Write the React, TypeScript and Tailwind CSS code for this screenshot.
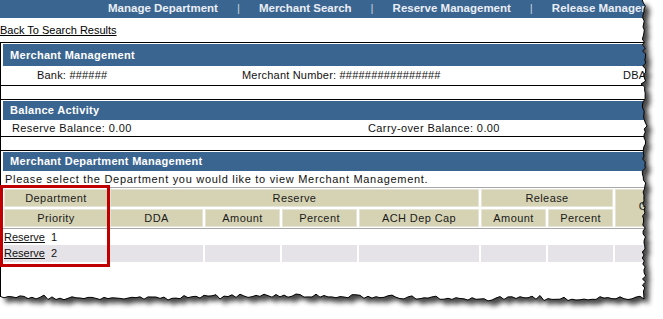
import React from "react";

const blue = "bg-[#3b6591]";

// torn paper edge, right side and bottom
function tornEdge() {
  let s = 11;
  const r = () => {
    s = (s * 16807) % 2147483647;
    return s / 2147483647;
  };
  const right: [number, number][] = [];
  for (let y = 0; y <= 291; y += 3) {
    const x = 644 + (r() - 0.5) * 3.5 + (r() > 0.85 ? (r() - 0.5) * 5 : 0);
    right.push([x, y]);
  }
  const bottom: [number, number][] = [];
  for (let x = 644; x >= 0; x -= 4) {
    const base = 297 + 1.5 * Math.sin(x / 60) + (x > 540 ? 2 : 0);
    const y = base + (r() - 0.5) * 3.5 + (r() > 0.85 ? (r() - 0.5) * 5 : 0);
    bottom.push([x, y]);
  }
  const pts = [...right, ...bottom].map(([x, y]) => `${x.toFixed(1)},${y.toFixed(1)}`);
  const edge = "M" + pts.join(" L");
  const paper = `M0,0 L${pts.join(" L")} Z`;
  return { edge, paper };
}

const { edge, paper } = tornEdge();

const Sep = () => <span className="px-[19px] font-normal text-[#c6cedb]">|</span>;

const Header = ({ children, h }: { children: React.ReactNode; h: string }) => (
  <div className={`${blue} ${h} flex items-center pl-[7px] text-[11px] font-bold tracking-[0.3px] text-white`}>
    {children}
  </div>
);

const cols = "grid grid-cols-[104px_93px_75px_75px_120px_65px_65px_80px] gap-x-[2px]";
const th = "flex h-[18px] items-center justify-center border border-[#e6e4d6] bg-[#d6d3b4] text-[11px] tracking-[0.4px] text-[#1a1a1a]";

export default function App() {
  return (
    <div className="relative h-[319px] w-[663px] overflow-hidden bg-white font-['Liberation_Sans',Arial,sans-serif] text-black">
      <div className="w-[663px]">
        <div className={`${blue} flex h-[18px] items-center overflow-hidden whitespace-nowrap pl-[108px] text-[11.5px] font-bold text-[#eaeef4]`}>
          <span>Manage Department</span>
          <Sep />
          <span>Merchant Search</span>
          <Sep />
          <span>Reserve Management</span>
          <Sep />
          <span>Release Management</span>
        </div>

        <div className="flex h-[24px] items-center">
          <a className="text-[11px] text-black underline">Back To Search Results</a>
        </div>

        <div className="border-l border-black">
          <div className="border-y border-black pl-[2px] pt-px">
            <Header h="h-[22px]">Merchant Management</Header>
            <div className="flex h-[19px] items-center whitespace-nowrap text-[11px] tracking-[0.2px] text-[#111]">
              <span className="w-[239px] pl-[34px]">Bank: ######</span>
              <span className="w-[381px]">Merchant Number: ################</span>
              <span>DBA</span>
            </div>
          </div>

          <div className="h-[13px]" />

          <div className="border-y border-black pl-[2px] pt-px">
            <Header h="h-[19px]">Balance Activity</Header>
            <div className="flex h-[16px] items-center whitespace-nowrap text-[11px] tracking-[0.4px] text-[#111]">
              <span className="w-[365px] pl-[9px]">Reserve Balance: 0.00</span>
              <span>Carry-over Balance: 0.00</span>
            </div>
          </div>

          <div className="h-[13px]" />

          <div className="border-t border-black pl-[2px] pt-px">
            <Header h="h-[19px]">Merchant Department Management</Header>
            <div className="flex h-[16px] items-center whitespace-nowrap pl-[2px] text-[11px] tracking-[0.7px] text-[#111]">
              Please select the Department you would like to view Merchant Management.
            </div>

            <div className="border-y border-[#a8a8a8] py-px pl-px">
              <div className={`${cols} gap-y-[2px]`}>
                <div className={th}>Department</div>
                <div className={`${th} col-span-4`}>Reserve</div>
                <div className={`${th} col-span-2`}>Release</div>
                <div className={`${th} row-span-2 h-auto pb-[4px]`}>Group</div>
                <div className={th}>Priority</div>
                <div className={th}>DDA</div>
                <div className={th}>Amount</div>
                <div className={th}>Percent</div>
                <div className={th}>ACH Dep Cap</div>
                <div className={th}>Amount</div>
                <div className={th}>Percent</div>
              </div>
            </div>

            <div className="pl-px text-[11px] text-[#111]">
              <div className={`${cols} h-[16px]`}>
                <div className="flex items-center whitespace-nowrap">
                  <a className="underline">Reserve</a>
                  <span className="ml-[6px]">1</span>
                </div>
              </div>
              <div className={`${cols} h-[16px]`}>
                <div className="flex items-center whitespace-nowrap bg-[#e6e3e8]">
                  <a className="underline">Reserve</a>
                  <span className="ml-[6px]">2</span>
                </div>
                <div className="bg-[#e6e3e8]" />
                <div className="bg-[#e6e3e8]" />
                <div className="bg-[#e6e3e8]" />
                <div className="bg-[#e6e3e8]" />
                <div className="bg-[#e6e3e8]" />
                <div className="bg-[#e6e3e8]" />
                <div className="bg-[#e6e3e8]" />
              </div>
            </div>
            <div className="h-[60px]" />
          </div>
        </div>
      </div>

      {/* annotation box */}
      <div className="pointer-events-none absolute left-0 top-[185px] h-[82px] w-[110px] border-[3px] border-[#c00000]" />

      <svg className="pointer-events-none absolute inset-0" width="663" height="319" viewBox="0 0 663 319">
        <defs>
          <clipPath id="outside">
            <path d={`M0,0 H663 V319 H0 Z ${paper}`} clipRule="evenodd" />
          </clipPath>
          <filter id="blur" x="-10%" y="-10%" width="120%" height="120%">
            <feGaussianBlur stdDeviation="2.5" />
          </filter>
        </defs>
        <path d={`M0,0 H663 V319 H0 Z ${paper}`} fill="#fff" fillRule="evenodd" />
        <g clipPath="url(#outside)">
          <path d={paper} transform="translate(5,5)" fill="#333" opacity="0.9" filter="url(#blur)" />
        </g>
        <path d={edge} fill="none" stroke="#000" strokeWidth="1" />
      </svg>
    </div>
  );
}
